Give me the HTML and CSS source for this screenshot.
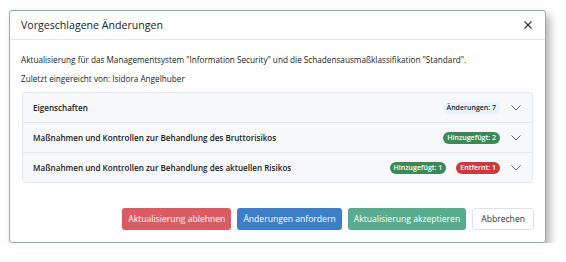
FILE: index.html
```html
<!DOCTYPE html>
<html lang="de">
<head>
    <meta charset="UTF-8">
    <title>Vorgeschlagene Änderungen</title>
    <link rel="stylesheet" href="styles.css">
</head>
<body>
    <div class="dialog">
        <div class="dialog-header">
            <h1>Vorgeschlagene Änderungen</h1>
            <button type="button" class="close" aria-label="Schließen">
                <svg width="8" height="8" viewBox="0 0 8 8"><path d="M0.5 0.5L7.5 7.5M7.5 0.5L0.5 7.5" stroke="#333" stroke-width="1.2" fill="none"/></svg>
            </button>
        </div>

        <div class="dialog-body">
            <p>Aktualisierung für das Managementsystem "Information Security" und die Schadensausmaßklassifikation "Standard".</p>
            <p>Zuletzt eingereicht von: Isidora Angelhuber</p>

            <!-- Accordion of change groups -->
            <div class="accordion">
                <div class="acc-row">
                    <span class="acc-title">Eigenschaften</span>
                    <span class="badge badge-info">Änderungen: 7</span>
                    <svg class="chevron" width="10" height="6" viewBox="0 0 10 6"><path d="M0.5 0.5L5 5L9.5 0.5" stroke="#666" stroke-width="1" fill="none"/></svg>
                </div>
                <div class="acc-row">
                    <span class="acc-title">Maßnahmen und Kontrollen zur Behandlung des Bruttorisikos</span>
                    <span class="badge badge-added">Hinzugefügt: 2</span>
                    <svg class="chevron" width="10" height="6" viewBox="0 0 10 6"><path d="M0.5 0.5L5 5L9.5 0.5" stroke="#666" stroke-width="1" fill="none"/></svg>
                </div>
                <div class="acc-row">
                    <span class="acc-title">Maßnahmen und Kontrollen zur Behandlung des aktuellen Risikos</span>
                    <span class="badge badge-added">Hinzugefügt: 1</span>
                    <span class="badge badge-removed">Entfernt: 1</span>
                    <svg class="chevron" width="10" height="6" viewBox="0 0 10 6"><path d="M0.5 0.5L5 5L9.5 0.5" stroke="#666" stroke-width="1" fill="none"/></svg>
                </div>
            </div>
        </div>

        <div class="dialog-footer">
            <button type="button" class="btn btn-red">Aktualisierung ablehnen</button>
            <button type="button" class="btn btn-blue">Änderungen anfordern</button>
            <button type="button" class="btn btn-green">Aktualisierung akzeptieren</button>
            <button type="button" class="btn btn-plain">Abbrechen</button>
        </div>
    </div>
</body>
</html>
```

FILE: styles.css
```css
/* General styling */
body {
    margin: 0;
    padding: 10px 0 0 9px;
    background: #ffffff;
    font-family: 'Open Sans', sans-serif;
    color: #212529;
}

.dialog {
    width: 535px;
    height: 231px;
    background: #ffffff;
    border: 1px solid #8fa9cf;
    border-radius: 3px;
    box-shadow: 4px 5px 8px rgba(0, 0, 0, 0.3);
    display: flex;
    flex-direction: column;
}

/* Header */
.dialog-header {
    display: flex;
    align-items: center;
    justify-content: space-between;
    height: 28px;
    padding: 0 13px 0 11px;
    border-bottom: 1px solid #e3e6ea;
}

.dialog-header h1 {
    margin: 0;
    font-size: 10.6px;
    font-weight: 400;
    color: #222;
}

.close {
    border: none;
    background: none;
    padding: 0;
    width: 8px;
    height: 8px;
    display: flex;
}

/* Body */
.dialog-body {
    padding: 14px 11px 0 11px;
}

.dialog-body p {
    margin: 0 0 8px 0;
    font-size: 8.2px;
    line-height: 11px;
    color: #222;
}

.accordion {
    margin: 3px 1px 0 1px;
    border: 1px solid #e4e7eb;
    border-radius: 4px;
    background: #f7f8fa;
}

.acc-row {
    display: flex;
    align-items: center;
    height: 29px;
    padding: 0 11px 0 10px;
    border-top: 1px solid #e4e7eb;
}

.acc-row:first-child {
    border-top: none;
}

.acc-title {
    flex: 1;
    font-size: 8.1px;
    font-weight: 600;
    color: #222;
}

.chevron {
    margin-left: 11px;
}

.badge {
    font-size: 7px;
    font-weight: 600;
    line-height: 12px;
    padding: 0 4px;
    border-radius: 7px;
    margin-left: 10px;
}

.badge-info {
    background: #e7f3fc;
    color: #222;
}

.badge-added {
    background: #3a8a57;
    color: #ffffff;
}

.badge-removed {
    background: #c83b3e;
    color: #ffffff;
}

/* Footer buttons */
.dialog-footer {
    margin-top: auto;
    display: flex;
    justify-content: flex-end;
    gap: 6px;
    padding: 0 11px 12px 0;
}

.btn {
    font-family: 'Open Sans', sans-serif;
    font-size: 8.6px;
    height: 22px;
    padding: 0 5px;
    border-radius: 3px;
    border: 1px solid transparent;
    color: #ffffff;
}

.btn-red {
    background: #da5b61;
}

.btn-blue {
    background: #3d7fc7;
}

.btn-green {
    background: #58ab8c;
}

.btn-plain {
    background: #ffffff;
    border-color: #dfe2e6;
    color: #333;
    padding: 0 8px;
}
```
